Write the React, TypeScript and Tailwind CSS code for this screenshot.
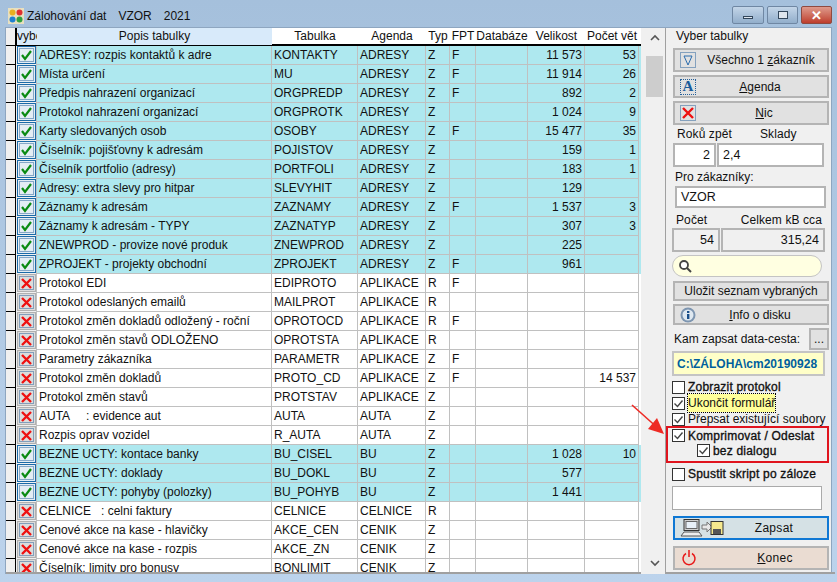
import React from 'react';

type Row = {
  popis: string;
  tab: string;
  agenda: string;
  typ: string;
  fpt?: string;
  vel?: string;
  pocet?: string;
  on?: boolean;
};

const rows: Row[] = [
  { popis: 'ADRESY: rozpis kontaktů k adre', tab: 'KONTAKTY', agenda: 'ADRESY', typ: 'Z', fpt: 'F', vel: '11 573', pocet: '53', on: true },
  { popis: 'Místa určení', tab: 'MU', agenda: 'ADRESY', typ: 'Z', fpt: 'F', vel: '11 914', pocet: '26', on: true },
  { popis: 'Předpis nahrazení organizací', tab: 'ORGPREDP', agenda: 'ADRESY', typ: 'Z', fpt: 'F', vel: '892', pocet: '2', on: true },
  { popis: 'Protokol nahrazení organizací', tab: 'ORGPROTK', agenda: 'ADRESY', typ: 'Z', vel: '1 024', pocet: '9', on: true },
  { popis: 'Karty sledovaných osob', tab: 'OSOBY', agenda: 'ADRESY', typ: 'Z', fpt: 'F', vel: '15 477', pocet: '35', on: true },
  { popis: 'Číselník: pojišťovny k adresám', tab: 'POJISTOV', agenda: 'ADRESY', typ: 'Z', vel: '159', pocet: '1', on: true },
  { popis: 'Číselník portfolio (adresy)', tab: 'PORTFOLI', agenda: 'ADRESY', typ: 'Z', vel: '183', pocet: '1', on: true },
  { popis: 'Adresy: extra slevy pro hitpar', tab: 'SLEVYHIT', agenda: 'ADRESY', typ: 'Z', vel: '129', on: true },
  { popis: 'Záznamy k adresám', tab: 'ZAZNAMY', agenda: 'ADRESY', typ: 'Z', fpt: 'F', vel: '1 537', pocet: '3', on: true },
  { popis: 'Záznamy k adresám - TYPY', tab: 'ZAZNATYP', agenda: 'ADRESY', typ: 'Z', vel: '307', pocet: '3', on: true },
  { popis: 'ZNEWPROD - provize nové produk', tab: 'ZNEWPROD', agenda: 'ADRESY', typ: 'Z', vel: '225', on: true },
  { popis: 'ZPROJEKT - projekty obchodní', tab: 'ZPROJEKT', agenda: 'ADRESY', typ: 'Z', fpt: 'F', vel: '961', on: true },
  { popis: 'Protokol EDI', tab: 'EDIPROTO', agenda: 'APLIKACE', typ: 'R', fpt: 'F' },
  { popis: 'Protokol odeslaných emailů', tab: 'MAILPROT', agenda: 'APLIKACE', typ: 'R' },
  { popis: 'Protokol změn dokladů odložený - roční', tab: 'OPROTOCD', agenda: 'APLIKACE', typ: 'R', fpt: 'F' },
  { popis: 'Protokol změn stavů ODLOŽENO', tab: 'OPROTSTA', agenda: 'APLIKACE', typ: 'R' },
  { popis: 'Parametry zákazníka', tab: 'PARAMETR', agenda: 'APLIKACE', typ: 'Z', fpt: 'F' },
  { popis: 'Protokol změn dokladů', tab: 'PROTO_CD', agenda: 'APLIKACE', typ: 'Z', fpt: 'F', pocet: '14 537' },
  { popis: 'Protokol změn stavů', tab: 'PROTSTAV', agenda: 'APLIKACE', typ: 'Z' },
  { popis: 'AUTA     : evidence aut', tab: 'AUTA', agenda: 'AUTA', typ: 'Z' },
  { popis: 'Rozpis oprav vozidel', tab: 'R_AUTA', agenda: 'AUTA', typ: 'Z' },
  { popis: 'BEZNE UCTY: kontace banky', tab: 'BU_CISEL', agenda: 'BU', typ: 'Z', vel: '1 028', pocet: '10', on: true },
  { popis: 'BEZNE UCTY: doklady', tab: 'BU_DOKL', agenda: 'BU', typ: 'Z', vel: '577', on: true },
  { popis: 'BEZNE UCTY: pohyby (polozky)', tab: 'BU_POHYB', agenda: 'BU', typ: 'Z', vel: '1 441', on: true },
  { popis: 'CELNICE   : celni faktury', tab: 'CELNICE', agenda: 'CELNICE', typ: 'R' },
  { popis: 'Cenové akce na kase - hlavičky', tab: 'AKCE_CEN', agenda: 'CENIK', typ: 'Z' },
  { popis: 'Cenové akce na kase - rozpis', tab: 'AKCE_ZN', agenda: 'CENIK', typ: 'Z' },
  { popis: 'Číselník: limity pro bonusy', tab: 'BONLIMIT', agenda: 'CENIK', typ: 'Z' },
];

const gridCols = 'grid grid-cols-[10px_21px_235px_86px_68px_24px_26px_52px_57px_54px]';
const cell = 'border-r border-b border-[#c0c0c0] px-[2px] whitespace-pre overflow-hidden leading-[18px]';

const RowIcon = ({ on }: { on?: boolean }) =>
  on ? (
    <svg width="19" height="18" viewBox="0 0 19 18" className="block">
      <rect x="0.5" y="0.5" width="18" height="17" fill="#e4edf4" stroke="#1a6aa8" />
      <rect x="2.5" y="2.5" width="14" height="13" fill="none" stroke="#26609a" strokeDasharray="1 1" />
      <path d="M5 9l3 4 6-8" fill="none" stroke="#0a8a12" strokeWidth="2.2" />
    </svg>
  ) : (
    <svg width="19" height="18" viewBox="0 0 19 18" className="block">
      <rect x="0.5" y="0.5" width="18" height="17" fill="#dcdcdc" stroke="#b0b0b0" />
      <rect x="2.5" y="2.5" width="14" height="13" fill="none" stroke="#26609a" strokeDasharray="1 1" />
      <path d="M5 5l9 9M14 5l-9 9" fill="none" stroke="#ee1111" strokeWidth="2.4" />
    </svg>
  );

const TableRow = ({ r }: { r: Row }) => (
  <div className={`${gridCols} h-[19px] text-[12px] text-[#111] ${r.on ? 'bg-[#aee8ef]' : 'bg-white'}`}>
    <div className="bg-[#f0f0f0] border-r border-b border-black" />
    <div className="bg-[#f0f0f0] border-r border-[#c0c0c0] pl-[1px]">
      <RowIcon on={r.on} />
    </div>
    <div className={cell}>{r.popis}</div>
    <div className={cell}>{r.tab}</div>
    <div className={cell}>{r.agenda}</div>
    <div className={cell}>{r.typ}</div>
    <div className={cell}>{r.fpt}</div>
    <div className={cell} />
    <div className={`${cell} text-right`}>{r.vel}</div>
    <div className={`${cell} text-right`}>{r.pocet}</div>
  </div>
);

const Btn = ({ children, icon, className = '' }: { children: React.ReactNode; icon?: React.ReactNode; className?: string }) => (
  <div className={`relative flex items-center justify-center border-2 border-[#b4b4b4] bg-[#e1e1e1] text-[12px] ${className}`}>
    {icon && <span className="absolute left-[5px] top-1/2 -translate-y-1/2 flex">{icon}</span>}
    {children}
  </div>
);

const Dotted = ({ children }: { children: React.ReactNode }) => (
  <svg width="16" height="16" viewBox="0 0 16 16" className="block">
    <rect x="0.5" y="0.5" width="15" height="15" fill="none" stroke="#26609a" strokeDasharray="1 1" />
    {children}
  </svg>
);

const Check = ({ label, checked, className = '', focus, strong }: { label: string; checked?: boolean; className?: string; focus?: boolean; strong?: boolean }) => (
  <div className={`flex items-center gap-[3px] ${className}`}>
    <svg width="13" height="13" viewBox="0 0 13 13" className="shrink-0">
      <rect x="0.5" y="0.5" width="12" height="12" fill="white" stroke="#333" />
      {checked && <path d="M2.5 6.5l3 3 5-6" fill="none" stroke="#444" strokeWidth="1.4" />}
    </svg>
    <span className={`text-[12px] whitespace-nowrap ${strong ? 'tracking-[0.2px] [-webkit-text-stroke:0.35px_#111]' : ''} ${focus ? 'bg-[#ffff99] outline-dotted outline-1 outline-black' : ''}`}>{label}</span>
  </div>
);

const Box = ({ children, className = '' }: { children?: React.ReactNode; className?: string }) => (
  <div className={`border-2 border-[#b4b4b4] text-[12.5px] flex items-center px-[4px] ${className}`}>{children}</div>
);

export default function App() {
  return (
    <div className="relative w-[837px] h-[582px] overflow-hidden bg-gradient-to-b from-[#a5c0dc] to-[#bcd3ec] text-[#111] [font-family:'Liberation_Sans',Arial,sans-serif]">
      {/* titulek okna */}
      <div className="flex h-[27px] pl-[8px] pr-[5px]">
        <svg width="16" height="16" viewBox="0 0 16 16" className="mr-[3px] mt-[8px]">
          <rect width="16" height="16" fill="#e8e0c0" />
          <circle cx="4.5" cy="4.5" r="3" fill="#e8b020" />
          <circle cx="11.5" cy="4.5" r="3" fill="#e03030" />
          <circle cx="4.5" cy="11.5" r="3" fill="#2080d0" />
          <circle cx="11.5" cy="11.5" r="3" fill="#30a040" />
        </svg>
        <div className="flex gap-[12px] text-[12px] whitespace-nowrap h-[16px] mt-[8px] leading-[16px]">
          <span>Zálohování dat</span>
          <span>VZOR</span>
          <span>2021</span>
        </div>
        <div className="ml-auto flex gap-[3px] mt-[6px] h-[18px]">
          <div className="w-[32px] rounded-[2px] border border-[#6f87a3] bg-gradient-to-b from-[#c3d5e8] to-[#92aecb] flex items-center justify-center">
            <div className="w-[10px] h-[3px] mt-[4px] bg-[#dfe6ee] border border-[#33475c]" />
          </div>
          <div className="w-[31px] rounded-[2px] border border-[#6f87a3] bg-gradient-to-b from-[#c3d5e8] to-[#92aecb] flex items-center justify-center">
            <div className="w-[10px] h-[8px] bg-[#dfe6ee] border border-[#33475c]" />
          </div>
          <div className="w-[31px] rounded-[2px] border border-[#8f4a40] bg-gradient-to-b from-[#dd9a8c] to-[#bd3c2c] flex items-center justify-center text-white text-[13px] font-bold leading-none">
            ✕
          </div>
        </div>
      </div>

      <div className="flex h-[547px] mx-[5px] bg-[#f0f0f0] border border-[#8ea6c0] border-b-0">
        {/* tabulka */}
        <div className="w-[635px] h-[546px] overflow-hidden border-b-2 border-[#a0a0a0] shrink-0">
          <div className={`${gridCols} h-[18px] text-[12px] text-center bg-white border-b-2 border-black leading-[17px]`}>
            <div className="bg-[#f0f0f0] border-r border-black" />
            <div className="bg-[#d8eafa] overflow-hidden whitespace-nowrap border-l border-black text-left">vybe</div>
            <div className="bg-[#d8eafa]">Popis tabulky</div>
            <div>Tabulka</div>
            <div>Agenda</div>
            <div>Typ</div>
            <div>FPT</div>
            <div>Databáze</div>
            <div>Velikost</div>
            <div className="whitespace-nowrap">Počet vět</div>
          </div>
          {rows.map((r) => (
            <TableRow key={r.tab} r={r} />
          ))}
        </div>

        {/* scrollbar */}
        <div className="w-[24px] shrink-0 flex flex-col items-center bg-[#f0f0f0] text-[#555] pl-[3px]">
          <svg width="10" height="10" viewBox="0 0 10 10" className="mt-[5px]"><path d="M1 7l4-4 4 4" fill="none" stroke="#555" strokeWidth="1.6" /></svg>
          <div className="w-[17px] h-[41px] mt-[13px] bg-[#cdcdcd]" />
          <svg width="10" height="10" viewBox="0 0 10 10" className="mt-auto mb-[6px]"><path d="M1 3l4 4 4-4" fill="none" stroke="#555" strokeWidth="1.6" /></svg>
        </div>

        {/* pravy panel */}
        <div className="relative flex-1 border-l border-[#a0a0a0] border-b-2 pl-[7px] pr-[6px] text-[12px]">
          <div className="h-[20px] pl-[3px] leading-[16px]">Vyber tabulky</div>
          <div className="flex flex-col gap-[3px]">
            <Btn className="h-[24px]" icon={<Dotted><path d="M4 4h8L8 13z" fill="none" stroke="#2a6cae" /></Dotted>}>
              <span className="ml-[20px]">Všechno 1 <u>z</u>ákazník</span>
            </Btn>
            <Btn className="h-[23px]" icon={
              <span className="flex items-center justify-center w-[16px] h-[16px] border border-dotted border-[#26609a] text-[15px] leading-none font-bold text-[#1a5a9a] [font-family:'Liberation_Serif',serif]">A</span>
            }>
              <span className="ml-[18px]"><u>A</u>genda</span>
            </Btn>
            <Btn className="h-[24px]" icon={<Dotted><path d="M3 3l10 10M13 3L3 13" fill="none" stroke="#ee1111" strokeWidth="2.4" /></Dotted>}>
              <span className="ml-[26px]"><u>N</u>ic</span>
            </Btn>
          </div>

          <div className="flex h-[18px] items-center pl-[4px] tracking-[0.1px]">
            <span className="w-[83px]">Roků zpět</span>
            <span>Sklady</span>
          </div>
          <div className="flex gap-[1px] h-[24px]">
            <Box className="w-[43px] bg-white justify-end">2</Box>
            <Box className="w-[107px] bg-white">2,4</Box>
          </div>
          <div className="h-[14px] mt-[3px] leading-[14px] pl-[2px]">Pro zákazníky:</div>
          <Box className="w-[151px] h-[22px] mt-[2px] ml-[2px] bg-white">VZOR</Box>
          <div className="flex justify-between h-[14px] mt-[5px] leading-[14px] w-[149px] pl-[3px] tracking-[0.1px]">
            <span>Počet</span>
            <span>Celkem kB cca</span>
          </div>
          <div className="flex gap-[1px] h-[24px] mt-[1px] -ml-[1px]">
            <Box className="w-[48px] bg-[#f0f0f0] justify-end">54</Box>
            <Box className="w-[104px] bg-[#f0f0f0] justify-end">315,24</Box>
          </div>
          <div className="flex items-center w-[150px] h-[22px] mt-[3px] -ml-[1px] rounded-full border border-[#c4c4c4] bg-[#ffffe1] pl-[5px]">
            <svg width="14" height="14" viewBox="0 0 14 14"><circle cx="6" cy="6" r="4" fill="white" stroke="#444" strokeWidth="1.8" /><path d="M9 9l4 4" stroke="#444" strokeWidth="2" /></svg>
          </div>

          <Btn className="h-[20px] mt-[4px]">Uložit seznam vybraných</Btn>
          <Btn className="h-[21px] mt-[3px]" icon={
            <svg width="16" height="16" viewBox="0 0 16 16">
              <circle cx="8" cy="8" r="7.5" fill="#7d95b0" />
              <circle cx="8" cy="8" r="5.5" fill="#dfe8f0" />
              <rect x="7" y="7" width="2.4" height="5" fill="#1a4f8a" />
              <rect x="7" y="4" width="2.4" height="2" fill="#1a4f8a" />
            </svg>
          }><span className="ml-[18px]"><u>I</u>nfo o disku</span></Btn>

          <div className="flex items-center justify-between h-[22px] mt-[3px] pl-[1px]">
            <span className="whitespace-nowrap">Kam zapsat data-cesta:</span>
            <div className="w-[20px] h-[22px] border-2 border-[#b4b4b4] bg-[#e1e1e1] flex items-center justify-center">...</div>
          </div>
          <div className="flex items-center w-[153px] h-[25px] mt-[1px] -ml-[1px] px-[3px] border-2 border-[#c4c4c4] bg-[#ffffc8] text-[12px] font-bold text-[#005f9e] whitespace-nowrap">
            C:\ZÁLOHA\cm20190928
          </div>

          <div className="flex flex-col mt-[3px] -ml-[1px]">
            <Check label="Zobrazit protokol" strong className="h-[16px]" />
            <Check label="Ukončit formulář" checked focus className="h-[16px]" />
            <Check label="Přepsat existující soubory" checked className="h-[16px]" />
          </div>
          <div className="w-[163px] h-[37px] -ml-[7px] -mt-[1px] border-2 border-[#e0141e] pl-[4px]">
            <Check label="Komprimovat / Odeslat" checked strong className="h-[15px]" />
            <Check label="bez dialogu" checked strong className="h-[15px] pl-[25px]" />
          </div>
          <Check label="Spustit skript po záloze" strong className="h-[16px] mt-[3px] -ml-[1px]" />
          <div className="w-[150px] h-[24px] mt-[4px] -ml-[1px] border border-[#aaa] bg-white" />

          <div className="relative flex items-center justify-center h-[24px] mt-[6px] border-2 border-[#0f78d4] bg-[#d5e1e5]">
            <svg width="44" height="18" viewBox="0 0 44 18" className="absolute left-[5px] top-[1px]">
              <rect x="4" y="0.5" width="15" height="11" fill="#d0d0d0" stroke="#333" />
              <rect x="6" y="2.5" width="11" height="7" fill="#e8f0f8" stroke="#666" />
              <path d="M1 17l3-4h15l3 4z" fill="#eee" stroke="#555" />
              <path d="M22 6h5V3l5 5-5 5v-3h-5z" fill="#e8e8e8" stroke="#777" />
              <rect x="31" y="2.5" width="12" height="13" fill="#f6e98e" stroke="#333" />
              <rect x="33" y="10" width="8" height="5" fill="#555" />
            </svg>
            <span className="ml-[46px] text-[12px] tracking-[0.3px]">Zapsat</span>
          </div>
          <div className="relative flex items-center justify-center h-[24px] mt-[6px] border-2 border-[#b4b4b4] bg-[#eadcd2]">
            <svg width="16" height="16" viewBox="0 0 16 16" className="absolute left-[6px] top-[2px]">
              <path d="M5 3.5a6 6 0 1 0 6 0M8 0v7" fill="none" stroke="#e81818" strokeWidth="1.5" />
            </svg>
            <span className="ml-[48px] text-[12px] tracking-[0.3px]"><u>K</u>onec</span>
          </div>
        </div>
      </div>

      {/* cervena sipka */}
      <svg width="40" height="36" viewBox="0 0 40 36" className="absolute left-[630px] top-[403px]">
        <path d="M2 2L30 27" stroke="#ee2a24" strokeWidth="1.6" />
        <path d="M34 31L18 26l9-11z" fill="#ee2a24" />
      </svg>
    </div>
  );
}
